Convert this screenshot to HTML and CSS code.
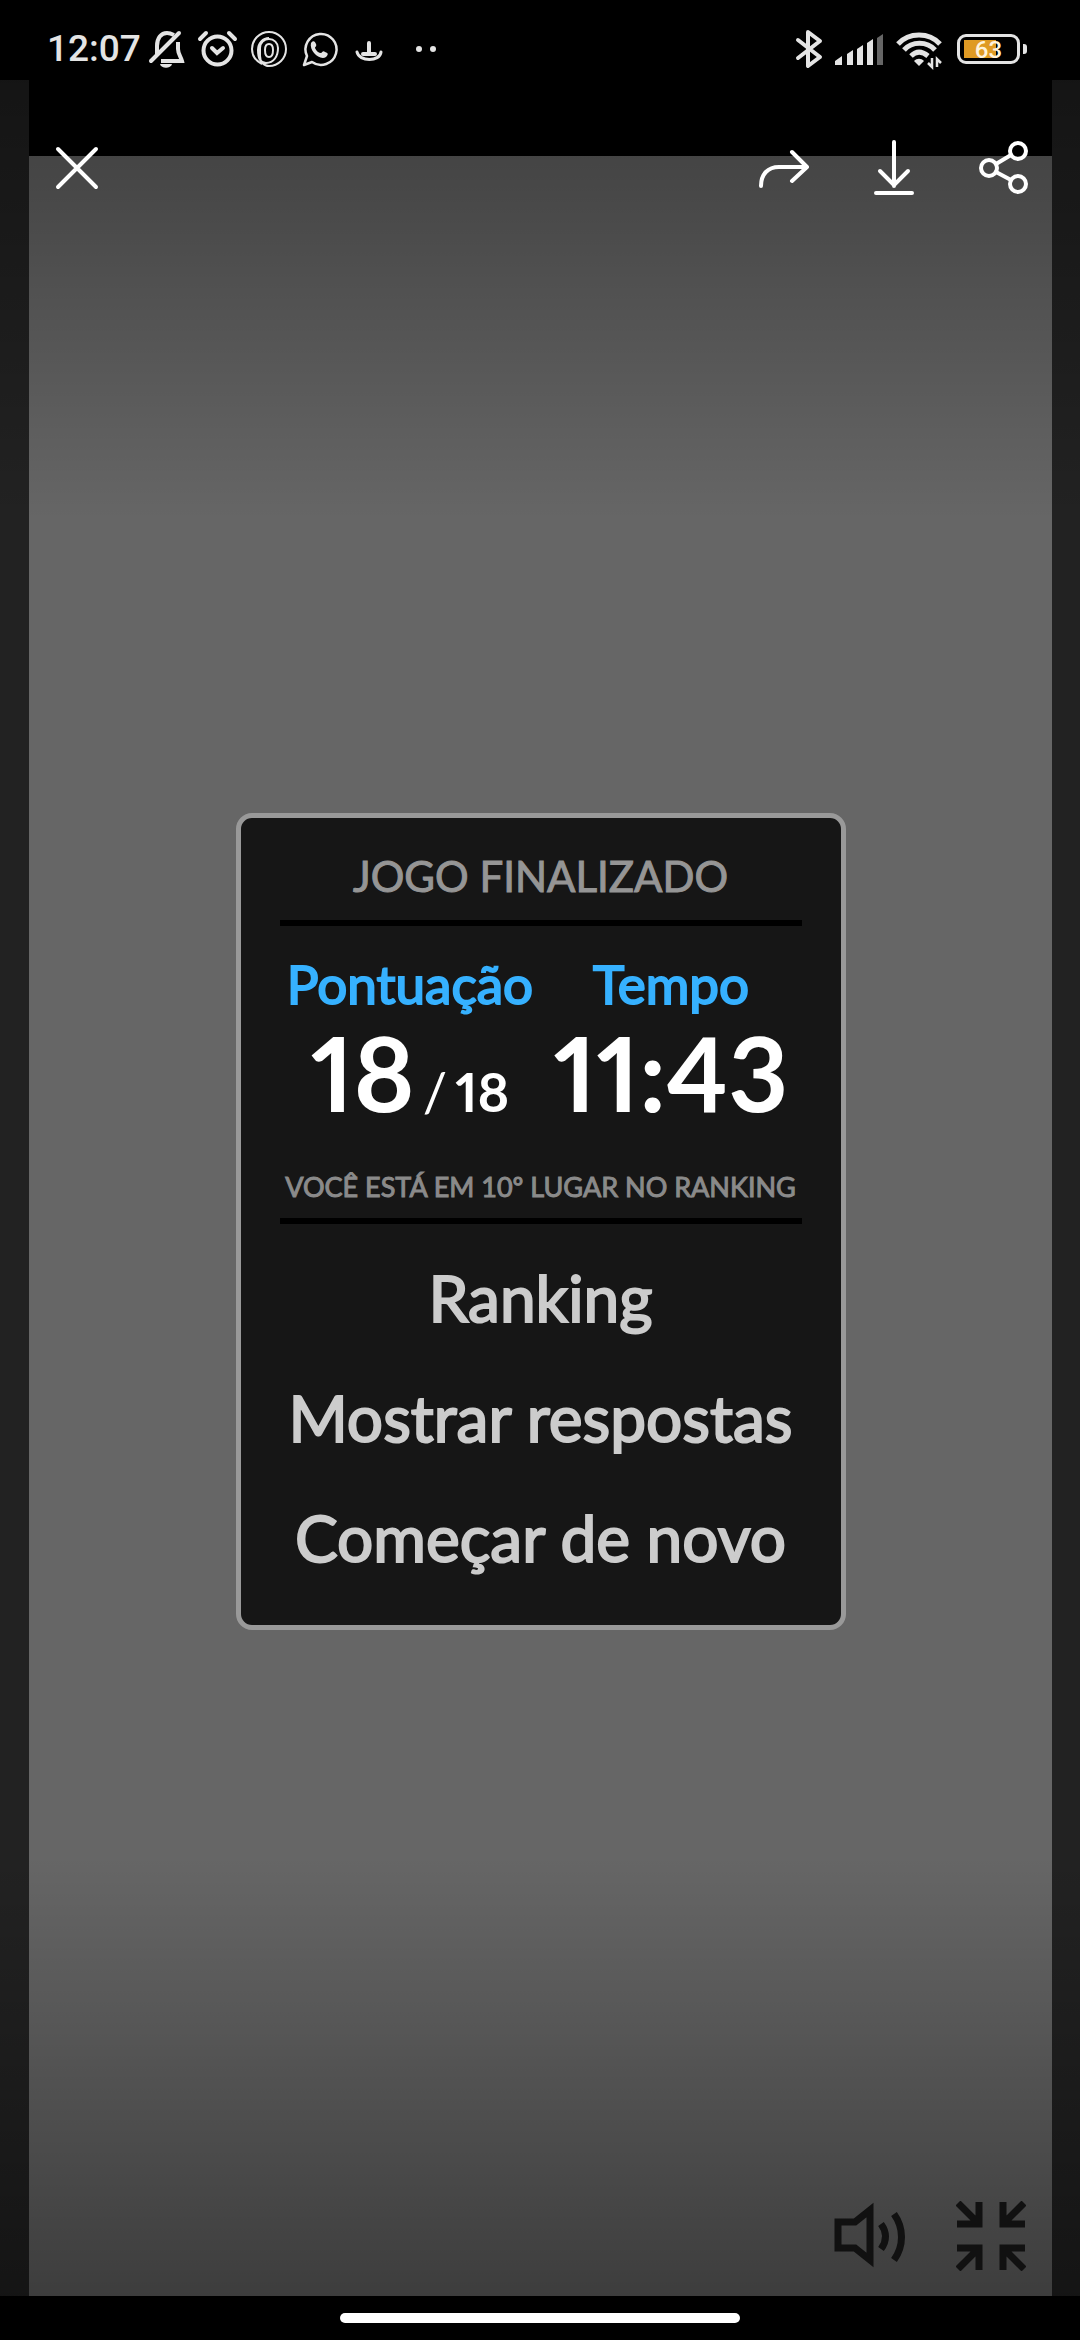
FILE: index.html
```html
<!DOCTYPE html>
<html lang="pt-BR">
<head>
<meta charset="utf-8">
<meta name="viewport" content="width=device-width, initial-scale=1">
<title>Jogo finalizado</title>
<link rel="stylesheet" href="styles.css">
</head>
<body>
<div class="screen">
  <header class="status">
    <div class="status-group">
      <time class="clock">12:07</time>
      <svg class="status-icons-left" viewBox="147 24 296 50" width="296" height="50" fill="none" stroke="#e4e4e4" aria-hidden="true">
        <path d="M157 55V46c0-8 4-13 10-13 3 0 5 1 7 2M178 42v7c0 5 3 8 4 12h-21" stroke-width="4"/>
        <path d="M151 61L179 33" stroke-width="4" stroke-linecap="round"/>
        <path d="M160 64h12c-1 5-11 5-12 0z" fill="#e4e4e4" stroke="none"/>
        <circle cx="217.500" cy="50.500" r="14" stroke-width="4"/>
        <path d="M200 39l6-6M235 39l-6-6" stroke-width="4" stroke-linecap="round"/>
        <path d="M212 48l5 5 6-5" stroke-width="4" stroke-linecap="round"/>
        <path d="M262 64c-6-3-10-8-10-15a17 17 0 1 1 17 17c-5 0-9-4-9-10v-8c0-5 4-9 9-9s9 4 9 9c0 8-4 15-12 15-6 0-8-5-8-13 0-7 5-12 11-12M269 57c-3 0-4-3-4-7s1-6 4-6 4 2 4 6-1 7-4 7z" stroke-width="2"/>
        <path d="M304 65l3-9a15.500 15.500 0 1 1 5 6z" stroke-width="2.500" stroke-linejoin="round"/>
        <path d="M311 43c2-3 4-2 5 1 1 2-1 3-1 4 1 3 4 5 6 5 1 0 2-3 4-1 4 1 3 3 1 5-6 4-17-6-15-14z" fill="#e4e4e4" stroke="none"/>
        <path d="M357 52c2 10 23 10 24 0" stroke-width="3" stroke-linecap="round"/>
        <path d="M369 43v10M363 54h12" stroke-width="4" stroke-linecap="round"/>
        <circle cx="419" cy="49" r="3" fill="#e4e4e4" stroke="none"/>
        <circle cx="433" cy="49" r="3" fill="#e4e4e4" stroke="none"/>
      </svg>
    </div>
    <div class="status-group status-right">
      <svg viewBox="795 24 150 50" width="150" height="50" fill="none" stroke="#e4e4e4" aria-hidden="true">
        <path d="M798 40l22 17-12 9V32l12 9-22 17" stroke-width="4" stroke-linejoin="round" stroke-linecap="round"/>
        <g fill="#e4e4e4" stroke="none">
          <path d="M835 65v-4l7-5v9zM847 65V54l6-4v15zM857 65V49l6-4v20zM867 65V43l6-4v26z"/>
          <path fill="#666" d="M877 65V38l6-4v31z"/>
        </g>
        <path d="M898 44c11-12 31-12 42 0M904 50c8-9 23-9 31 0M911 56c5-5 11-5 17 0" stroke-width="5"/>
        <path d="M914 61c3-3 7-3 10 0l-5 5z" fill="#e4e4e4" stroke="none"/>
        <path d="M932 58v9l-4-4M937 67v-8l4 4" stroke-width="2.500"/>
      </svg>
      <div class="battery"><span>63</span></div>
    </div>
  </header>

  <main class="viewer">
    <nav class="toolbar" aria-label="Ações">
      <button class="tool" aria-label="Fechar">
        <svg viewBox="0 0 60 60" width="60" height="60"><path d="M11 11l38 38M49 11L11 49"/></svg>
      </button>
      <div class="tool-group">
        <button class="tool" aria-label="Encaminhar">
          <svg viewBox="0 0 60 60" width="60" height="60"><path d="M7 48c0-12 7-19 18-19h28M38 14l15 15-15 14"/></svg>
        </button>
        <button class="tool" aria-label="Baixar">
          <svg viewBox="0 0 60 60" width="60" height="60"><path d="M30 4v44M16 33l14 14 14-14M12 55h36"/></svg>
        </button>
        <button class="tool" aria-label="Compartilhar">
          <svg viewBox="0 0 60 60" width="60" height="60"><circle cx="15" cy="30" r="8"/><circle cx="44" cy="13" r="8"/><circle cx="44" cy="46" r="8"/><path d="M22 26l15-9M22 34l15 8"/></svg>
        </button>
      </div>
    </nav>

    <div class="game">
      <section class="card">
        <h1 class="title">JOGO FINALIZADO</h1>
        <div class="scores">
          <div class="score">
            <h2 class="label">Pontuação</h2>
            <p class="value">18<span class="total"><span class="slash">/</span>18</span></p>
          </div>
          <div class="score">
            <h2 class="label">Tempo</h2>
            <p class="value">11:43</p>
          </div>
        </div>
        <p class="place">VOCÊ ESTÁ EM 10º LUGAR NO RANKING</p>
        <div class="actions">
          <button class="action">Ranking</button>
          <button class="action">Mostrar respostas</button>
          <button class="action">Começar de novo</button>
        </div>
      </section>
      <div class="controls">
        <button class="tool" aria-label="Som">
          <svg class="dark" viewBox="0 0 76 70" width="76" height="70"><path d="M5 21h17l15-12v50L22 47H5z"/><path d="M48 23c6 8 6 17 0 25M61 13c10 14 10 32 0 46"/></svg>
        </button>
        <button class="tool" aria-label="Sair da tela cheia">
          <svg class="dark" viewBox="0 0 70 70" width="70" height="70"><path d="M2 2l21 21M1 23h22V1M68 2L47 23M69 23H47V1M2 68l21-21M1 47h22v22M68 68L47 47M69 47H47v22"/></svg>
        </button>
      </div>
    </div>
  </main>
  <footer class="gesture"><span class="pill"></span></footer>
</div>
</body>
</html>
```
FILE: styles.css
```css
* { box-sizing: border-box; }
body { margin: 0; background: #000; font-family: Lato, "Open Sans", sans-serif; }
h1, h2, p { margin: 0; font-weight: 400; }
button { border: 0; padding: 0; background: none; color: inherit; font: inherit; cursor: pointer; }
svg { display: block; }

.screen { min-height: 100vh; display: flex; flex-direction: column; }

.status {
  height: 80px;
  padding: 0 53px 0 47px;
  display: flex;
  justify-content: space-between;
  align-items: center;
  color: #e4e4e4;
  font-family: Roboto, sans-serif;
}
.status-group { display: flex; align-items: center; gap: 6px; padding-top: 18px; }
.status-right { gap: 12px; }
.clock { font-size: 37px; line-height: 50px; font-weight: 500; }
.battery {
  position: relative;
  width: 63px;
  height: 30px;
  margin-right: 7px;
  border: 3px solid #e4e4e4;
  border-radius: 9px;
  background: linear-gradient(#df9a24, #df9a24) 4px 3px / 32px 18px no-repeat;
  color: #fff3dc;
  font-size: 24px;
  line-height: 26px;
  font-weight: 500;
  text-align: center;
}
.battery::after {
  content: "";
  position: absolute;
  right: -10px;
  top: 7px;
  width: 4px;
  height: 10px;
  border-radius: 0 3px 3px 0;
  background: #e4e4e4;
}

.viewer {
  flex: 1;
  display: flex;
  flex-direction: column;
  padding: 0 28px 0 29px;
  background:
    linear-gradient(rgb(0 0 0 / 40%), transparent 440px),
    linear-gradient(0deg, rgb(0 0 0 / 40%), transparent 440px),
    linear-gradient(90deg, #222 29px, transparent 29px calc(100% - 28px), #222 calc(100% - 28px)),
    linear-gradient(#000 76px, #666 76px);
}
.toolbar {
  height: 76px;
  padding: 58px 18px 0 18px;
  display: flex;
  justify-content: space-between;
}
.tool-group { display: flex; gap: 50px; }
.tool { width: 60px; height: 60px; }
.tool svg { fill: none; stroke: #fff; stroke-width: 4; stroke-linecap: round; stroke-linejoin: round; }
.tool svg.dark { stroke: #111; stroke-width: 7; stroke-linecap: butt; stroke-linejoin: miter; }

.game {
  flex: 1;
  display: grid;
  grid-template-rows: 1fr auto 1fr;
  justify-items: center;
  padding-bottom: 9px;
}
.card {
  grid-row: 2;
  width: 610px;
  max-width: 100%;
  padding: 32px 39px 47px;
  border: 5px solid #999;
  border-radius: 16px;
  background: #161616;
  text-align: center;
  -webkit-text-stroke: 1px currentcolor;
}
.title {
  padding-bottom: 18px;
  border-bottom: 6px solid #000;
  color: #959595;
  font-size: 42px;
  line-height: 52px;
}
.scores { display: grid; grid-template-columns: 1fr 1fr; padding-top: 26px; }
.label { color: #36b1ff; font-size: 53px; line-height: 64px; -webkit-text-stroke-width: 2px; }
.value {
  color: #fff;
  font-size: 104px;
  line-height: 112px;
  font-weight: 700;
  font-variant-numeric: proportional-nums;
  white-space: nowrap;
  -webkit-text-stroke-width: 0;
}
.total { font-size: 54px; line-height: 0; }
.slash { font-weight: 400; padding: 0 8px; }
.place {
  padding: 39px 0 11px;
  border-bottom: 6px solid #000;
  color: #8a8a8a;
  font-size: 27px;
  line-height: 40px;
  white-space: nowrap;
}
.actions { display: flex; flex-direction: column; gap: 40px; padding-top: 34px; }
.action { color: #ccc; font-size: 64px; line-height: 80px; white-space: nowrap; -webkit-text-stroke: 2px currentcolor; }

.controls {
  grid-row: 3;
  justify-self: end;
  align-self: end;
  display: flex;
  gap: 47px;
  padding: 0 26px 16px 0;
}
.controls .tool { width: auto; height: auto; }

.gesture { height: 44px; display: flex; justify-content: center; align-items: center; }
.pill { width: 400px; height: 10px; border-radius: 5px; background: #fff; }
```
